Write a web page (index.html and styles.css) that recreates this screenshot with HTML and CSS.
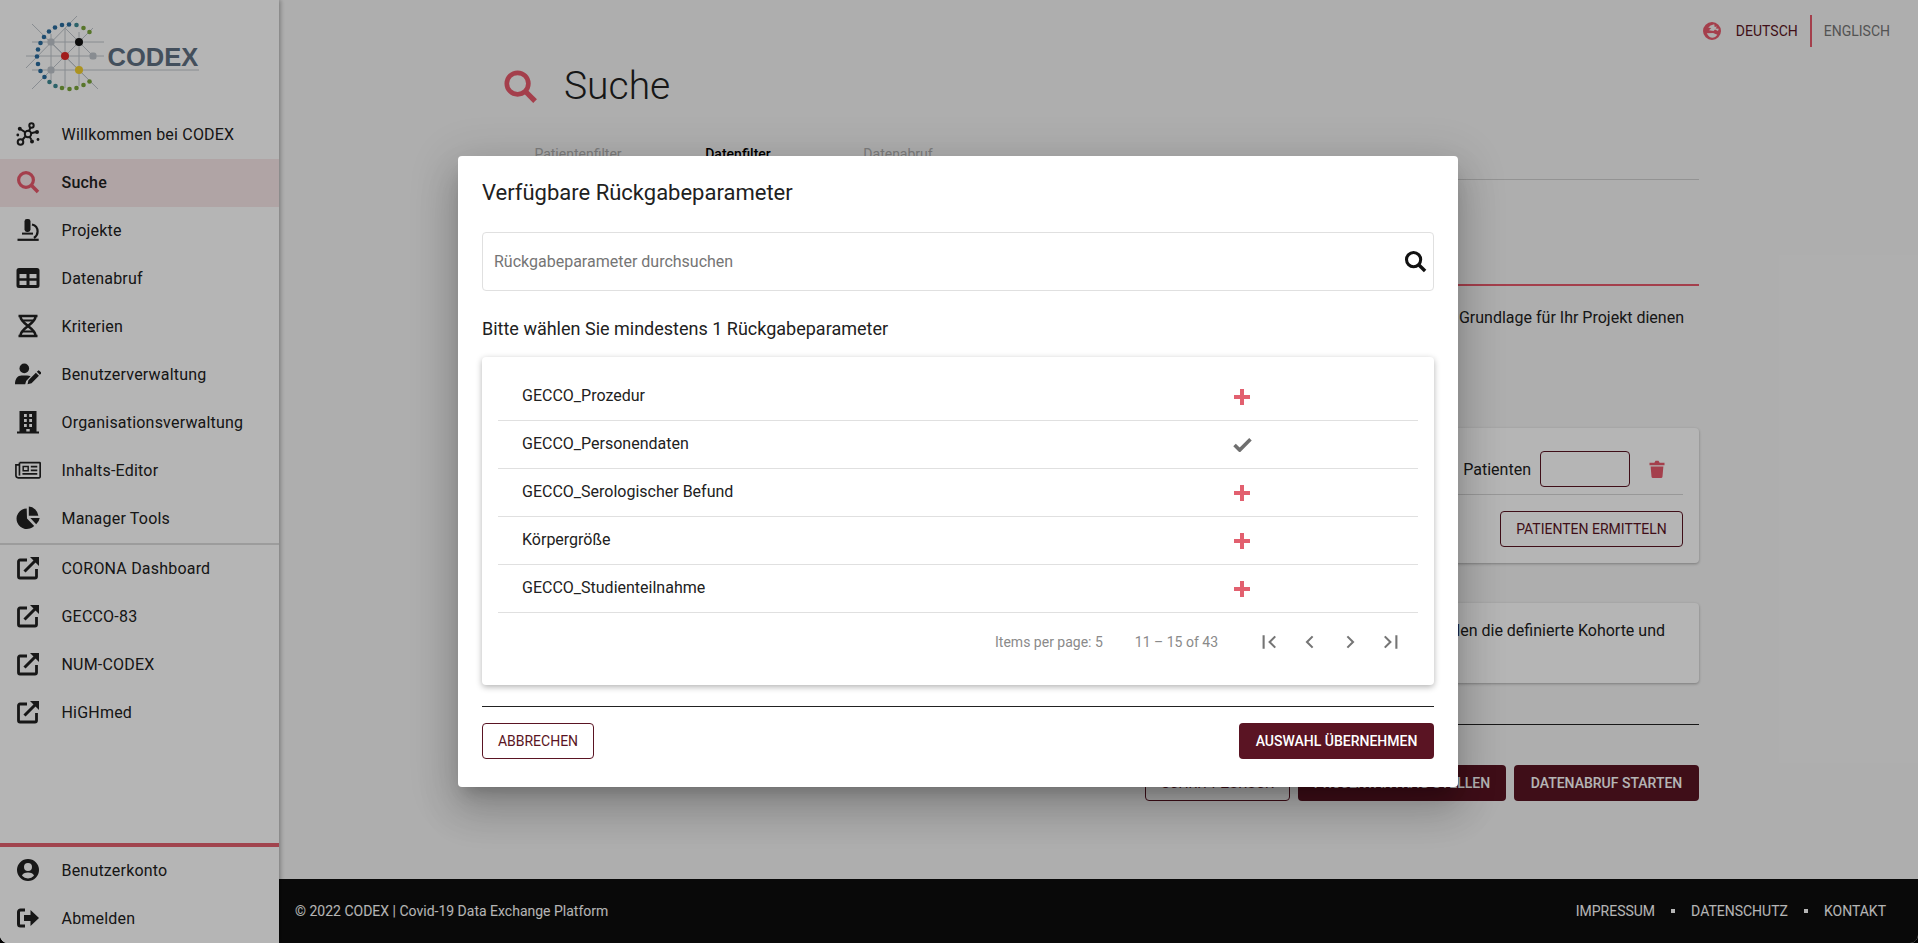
FILE: index.html

```html
<!DOCTYPE html>
<html lang="de">
<head>
    <meta charset="UTF-8">
    <meta name="viewport" content="width=device-width, initial-scale=1.0">
    <title>CODEX Suche</title>
    <link rel="stylesheet" href="styles.css">
</head>
<body>
<svg class="icon-defs" aria-hidden="true">
    <symbol id="i-search" viewBox="0 0 24 24">
        <circle cx="10" cy="10" r="7.4" fill="none" stroke="currentColor" stroke-width="3.2"/>
        <path d="M15.6 15.6L22 22" fill="none" stroke="currentColor" stroke-width="3.6"/>
    </symbol>
    <symbol id="i-molecule" viewBox="0 0 24 24">
        <g fill="none" stroke="currentColor" stroke-width="2">
            <circle cx="12" cy="12" r="3.200"/>
            <circle cx="15.500" cy="3.500" r="2.200"/>
            <circle cx="4.500" cy="20" r="2.800"/>
            <path d="M13 9l1.600-3.700M9.600 14.200l-3.300 3.800M15 11.300l5-1.300M9.400 10.400L5 7.500M13.500 14.800l2 3"/>
        </g>
        <circle cx="21" cy="10" r="2" fill="currentColor"/>
        <circle cx="3.800" cy="6.800" r="2" fill="currentColor"/>
        <circle cx="16" cy="19.500" r="2" fill="currentColor"/>
        <circle cx="22" cy="17.500" r="1.400" fill="currentColor"/>
        <circle cx="1.800" cy="13" r="1.400" fill="currentColor"/>
    </symbol>
    <symbol id="i-microscope" viewBox="0 0 24 24">
        <rect x="8.500" y="1" width="6" height="13" rx="2.400" fill="currentColor"/>
        <rect x="6" y="14.600" width="11" height="2" fill="currentColor"/>
        <path d="M16 6.500c3.600.9 5.600 3.600 5.600 7 0 3-1.600 5-3.600 6.500" fill="none" stroke="currentColor" stroke-width="2.200"/>
        <path d="M1.500 21.800h21.200" stroke="currentColor" stroke-width="2.200"/>
    </symbol>
    <symbol id="i-table" viewBox="0 0 24 24">
        <path fill-rule="evenodd" fill="currentColor" d="M3 2h18a2.500 2.500 0 0 1 2.500 2.500v15A2.500 2.500 0 0 1 21 22H3a2.500 2.500 0 0 1-2.500-2.500v-15A2.500 2.500 0 0 1 3 2zM3.500 8v4.300h7V8zM13.500 8v4.300h7V8zM3.500 14.700V19h7v-4.300zM13.500 14.700V19h7v-4.300z"/>
    </symbol>
    <symbol id="i-dna" viewBox="0 0 24 24">
        <path d="M2.500 2h19M2.500 22h19" stroke="currentColor" stroke-width="2.600"/>
        <path d="M4.500 2.500c0 7.500 15 11.500 15 19M19.500 2.500c0 7.500-15 11.500-15 19" fill="none" stroke="currentColor" stroke-width="2.600"/>
        <path d="M6.500 6.500h11M6.500 17.500h11" stroke="currentColor" stroke-width="1.800"/>
    </symbol>
    <symbol id="i-user-edit" viewBox="0 0 28 24">
        <circle cx="10" cy="6" r="5.200" fill="currentColor"/>
        <path d="M0 23c0-6 3-9.500 7-9.500h6c1.500 0 2.800.4 3.800 1L12 19.500 11 23z" fill="currentColor"/>
        <path d="M13.500 23l1-4.300 8-8 3.300 3.300-8 8zM23.500 9.700l1.300-1.300a1 1 0 0 1 1.400 0l1.800 1.800a1 1 0 0 1 0 1.400l-1.300 1.300z" fill="currentColor"/>
    </symbol>
    <symbol id="i-building" viewBox="0 0 24 24">
        <path fill-rule="evenodd" fill="currentColor" d="M3.500 1h17v20.500h2.500V23.500H1V21.500h2.500zM8 4v3h2.800V4zM13.200 4v3H16V4zM8 9v3h2.800V9zM13.200 9v3H16V9zM8 14v3h2.800v-3zM13.200 14v3H16v-3zM10.300 19v2.500h3.400V19z"/>
    </symbol>
    <symbol id="i-news" viewBox="0 0 28 24">
        <g fill="none" stroke="currentColor" stroke-width="1.800">
            <path d="M5 4h21.500a.6.600 0 0 1 .6.600v14.800a1 1 0 0 1-1 1H3.500A2.500 2.500 0 0 1 1 18V6.500h3.800"/>
            <path d="M4.800 4v14"/>
        </g>
        <path fill-rule="evenodd" fill="currentColor" d="M8 7.500h7v6H8zM9.600 9.100v2.800h3.800V9.100z"/>
        <path fill="currentColor" d="M17 7.500h7v1.800h-7zM17 11.500h7v1.800h-7zM8 15.300h16v1.800H8z"/>
    </symbol>
    <symbol id="i-pie" viewBox="0 0 24 24">
        <path fill="currentColor" d="M10.700 2.500A10.300 10.300 0 1 0 18.200 20L11 12.500z"/>
        <path fill="currentColor" d="M12.800 0.500A10.500 10.500 0 0 1 22.400 9.700H12.800z"/>
        <path fill="currentColor" d="M14.300 12h9.400a10.600 10.600 0 0 1-3.500 6.300z"/>
    </symbol>
    <symbol id="i-external" viewBox="0 0 24 24">
        <path d="M11 4H4a1.500 1.500 0 0 0-1.500 1.500v15A1.500 1.500 0 0 0 4 22h15a1.500 1.500 0 0 0 1.500-1.500V13" fill="none" stroke="currentColor" stroke-width="2.800"/>
        <path d="M8.500 15.500L20 4" stroke="currentColor" stroke-width="3"/>
        <path d="M14 1h9v9z" fill="currentColor"/>
    </symbol>
    <symbol id="i-user" viewBox="0 0 24 24">
        <path fill-rule="evenodd" fill="currentColor" d="M12 1a11 11 0 1 1 0 22 11 11 0 0 1 0-22zM12 5a4 4 0 1 0 0 8 4 4 0 0 0 0-8zM12 14.600c-3 0-5.400 1.200-6 3.100A8.500 8.500 0 0 0 12 20.400a8.500 8.500 0 0 0 6-2.700c-.6-1.900-3-3.100-6-3.100z"/>
    </symbol>
    <symbol id="i-logout" viewBox="0 0 24 24">
        <path d="M9 4H4.500A2 2 0 0 0 2.500 6v12a2 2 0 0 0 2 2H9" fill="none" stroke="currentColor" stroke-width="3"/>
        <path d="M8 9h6.500V4L23 12l-8.500 8v-5H8z" fill="currentColor"/>
    </symbol>
    <symbol id="i-globe" viewBox="0 0 24 24">
        <path fill-rule="evenodd" fill="currentColor" d="M12 0a12 12 0 1 1 0 24 12 12 0 0 1 0-24zM15 3l-5 1.500-3 3 4 .5-3 3 6 1 2-2 4 2 1-3-4-.5 1.500-2.500-3 .5zM5 15c2 4 5 6 7.500 6s5-1.500 6.500-4l-5.500-2.500z"/>
    </symbol>
    <symbol id="i-trash" viewBox="0 0 24 24">
        <path fill="currentColor" d="M2 3.500h6.500L10 1h4l1.500 2.500H22V7H2zM3.500 8.500h17l-1.200 13.700A2 2 0 0 1 17.300 24H6.700a2 2 0 0 1-2-1.800z"/>
    </symbol>
    <symbol id="i-first" viewBox="0 0 24 24">
        <path d="M3.500 3v18" stroke="currentColor" stroke-width="2.800" fill="none"/>
        <path d="M19 4.500l-7.500 7.500 7.500 7.500" stroke="currentColor" stroke-width="2.800" fill="none"/>
    </symbol>
    <symbol id="i-prev" viewBox="0 0 24 24">
        <path d="M15.500 4.500L8 12l7.500 7.500" stroke="currentColor" stroke-width="2.800" fill="none"/>
    </symbol>
    <symbol id="i-next" viewBox="0 0 24 24">
        <path d="M8.500 4.500L16 12l-7.500 7.500" stroke="currentColor" stroke-width="2.800" fill="none"/>
    </symbol>
    <symbol id="i-last" viewBox="0 0 24 24">
        <path d="M5 4.500l7.500 7.500L5 19.500" stroke="currentColor" stroke-width="2.800" fill="none"/>
        <path d="M20.500 3v18" stroke="currentColor" stroke-width="2.800" fill="none"/>
    </symbol>
</svg>

<div class="app">
    <aside class="sidebar">
        <div class="logo">
            <svg width="220" height="111" viewBox="0 0 220 111">
                <g stroke="#c0c6cc" stroke-width="1" fill="none">
                    <path d="M32 42h72M26 56h78M32 70h167"/>
                    <path d="M51 34v46M65 28v60M79 32v54"/>
                    <path d="M32 24l66 65M26 68l51-52M32 89l61-61M51 42l42 42M65 28l28 28"/>
                </g>
                <g fill="#2a6c9e">
                    <circle cx="62" cy="25" r="2.300"/><circle cx="55" cy="27.500" r="2.300"/><circle cx="49" cy="31.500" r="2.300"/>
                    <circle cx="44" cy="37" r="2.300"/><circle cx="40.500" cy="43" r="2.300"/><circle cx="38" cy="49.500" r="2.300"/>
                    <circle cx="37" cy="56.500" r="2.300"/><circle cx="38" cy="64" r="2.300"/><circle cx="40.500" cy="71" r="2.300"/>
                    <circle cx="44.500" cy="77" r="2.300"/><circle cx="69" cy="24.500" r="2.300"/>
                </g>
                <g fill="#3f8a94">
                    <circle cx="76.500" cy="25" r="2.300"/><circle cx="49.500" cy="82" r="2.300"/><circle cx="55.500" cy="86" r="2.300"/>
                </g>
                <g fill="#7ba63c">
                    <circle cx="83.500" cy="28" r="2.300"/><circle cx="89.500" cy="32" r="2.300"/><circle cx="62" cy="88" r="2.300"/>
                    <circle cx="69.500" cy="89" r="2.300"/><circle cx="76.500" cy="88" r="2.300"/><circle cx="83.500" cy="85" r="2.300"/>
                    <circle cx="89.500" cy="81.500" r="2.300"/>
                </g>
                <rect x="47.500" y="38.500" width="7" height="7" rx="2.500" fill="#c0c6cc"/>
                <circle cx="79" cy="42" r="4" fill="#111"/>
                <circle cx="65" cy="56" r="4" fill="#e32a2a"/>
                <rect x="89.500" y="52.500" width="7" height="7" rx="2.500" fill="#c0c6cc"/>
                <rect x="47.500" y="66.500" width="7" height="7" rx="2.500" fill="#c0c6cc"/>
                <circle cx="79" cy="70" r="4" fill="#f2cf2e"/>
                <text class="logo-text" x="107.500" y="65.500">CODEX</text>
            </svg>
        </div>
        <nav class="nav-main">
            <a class="nav-item"><svg class="nav-icon"><use href="#i-molecule"/></svg>Willkommen bei CODEX</a>
            <a class="nav-item active"><svg class="nav-icon"><use href="#i-search"/></svg>Suche</a>
            <a class="nav-item"><svg class="nav-icon"><use href="#i-microscope"/></svg>Projekte</a>
            <a class="nav-item"><svg class="nav-icon"><use href="#i-table"/></svg>Datenabruf</a>
            <a class="nav-item"><svg class="nav-icon"><use href="#i-dna"/></svg>Kriterien</a>
            <a class="nav-item"><svg class="nav-icon"><use href="#i-user-edit"/></svg>Benutzerverwaltung</a>
            <a class="nav-item"><svg class="nav-icon"><use href="#i-building"/></svg>Organisationsverwaltung</a>
            <a class="nav-item"><svg class="nav-icon"><use href="#i-news"/></svg>Inhalts-Editor</a>
            <a class="nav-item"><svg class="nav-icon"><use href="#i-pie"/></svg>Manager Tools</a>
        </nav>
        <nav class="nav-links">
            <a class="nav-item"><svg class="nav-icon"><use href="#i-external"/></svg>CORONA Dashboard</a>
            <a class="nav-item"><svg class="nav-icon"><use href="#i-external"/></svg>GECCO-83</a>
            <a class="nav-item"><svg class="nav-icon"><use href="#i-external"/></svg>NUM-CODEX</a>
            <a class="nav-item"><svg class="nav-icon"><use href="#i-external"/></svg>HiGHmed</a>
        </nav>
        <nav class="nav-bottom">
            <a class="nav-item"><svg class="nav-icon"><use href="#i-user"/></svg>Benutzerkonto</a>
            <a class="nav-item"><svg class="nav-icon"><use href="#i-logout"/></svg>Abmelden</a>
        </nav>
    </aside>

    <div class="main">
        <div class="lang">
            <svg class="lang-icon"><use href="#i-globe"/></svg>
            <span class="lang-active">DEUTSCH</span>
            <span class="lang-other">ENGLISCH</span>
        </div>
        <main class="content">
            <div class="page-title">
                <svg class="page-icon"><use href="#i-search"/></svg>
                <h1>Suche</h1>
            </div>
            <div class="tabs">
                <span class="tab">Patientenfilter</span>
                <span class="tab tab-current">Datenfilter</span>
                <span class="tab">Datenabruf</span>
            </div>
            <div class="section-head"></div>
            <p class="intro">Grundlage für Ihr Projekt dienen</p>
            <section class="panel panel-cohort">
                <div class="panel-row">
                    <span>Patienten</span>
                    <input class="count-input" type="text">
                    <svg class="trash"><use href="#i-trash"/></svg>
                </div>
                <div class="panel-actions">
                    <button class="btn btn-outline btn-wide">PATIENTEN ERMITTELN</button>
                </div>
            </section>
            <section class="panel panel-note">
                <p>stellen die definierte Kohorte und</p>
            </section>
            <hr class="rule">
            <div class="actions">
                <button class="btn btn-outline btn-back">SCHRITT ZURÜCK</button>
                <button class="btn btn-solid btn-request">PROJEKTANTRAG STELLEN</button>
                <button class="btn btn-solid btn-start">DATENABRUF STARTEN</button>
            </div>
        </main>
        <footer class="footer">
            <span>© 2022 CODEX | Covid-19 Data Exchange Platform</span>
            <div class="footer-links">
                <a>IMPRESSUM</a><i></i><a>DATENSCHUTZ</a><i></i><a>KONTAKT</a>
            </div>
        </footer>
    </div>

    <div class="backdrop">
        <div class="dialog">
            <h2>Verfügbare Rückgabeparameter</h2>
            <div class="search">
                <input type="text" placeholder="Rückgabeparameter durchsuchen">
                <svg class="search-icon"><use href="#i-search"/></svg>
            </div>
            <h3>Bitte wählen Sie mindestens 1 Rückgabeparameter</h3>
            <div class="list-card">
                <div class="list-row"><span class="row-name">GECCO_Prozedur</span><span class="plus"></span></div>
                <div class="list-row">
                    <span class="row-name">GECCO_Personendaten</span>
                    <svg class="check" viewBox="0 0 20 16"><path d="M1.500 8.500l5.500 5.500L18.500 2.500" fill="none" stroke="currentColor" stroke-width="3.800"/></svg>
                </div>
                <div class="list-row"><span class="row-name">GECCO_Serologischer Befund</span><span class="plus"></span></div>
                <div class="list-row"><span class="row-name">Körpergröße</span><span class="plus"></span></div>
                <div class="list-row"><span class="row-name">GECCO_Studienteilnahme</span><span class="plus"></span></div>
                <div class="paginator">
                    <span>Items per page: 5</span>
                    <span>11 – 15 of 43</span>
                    <div class="pager-btns">
                        <svg><use href="#i-first"/></svg>
                        <svg><use href="#i-prev"/></svg>
                        <svg><use href="#i-next"/></svg>
                        <svg><use href="#i-last"/></svg>
                    </div>
                </div>
            </div>
            <hr class="dialog-rule">
            <div class="dialog-actions">
                <button class="btn btn-outline btn-cancel">ABBRECHEN</button>
                <button class="btn btn-solid btn-apply">AUSWAHL ÜBERNEHMEN</button>
            </div>
        </div>
    </div>
</div>
</body>
</html>
```

FILE: styles.css

```css
* {
    box-sizing: border-box;
}
html {
    background: #000;
}
body {
    margin: 0;
    font-family: Roboto, 'Liberation Sans', sans-serif;
    color: #212121;
}
.icon-defs {
    display: none;
}
.app {
    display: flex;
    height: 943px;
    overflow: hidden;
    position: relative;
    border-radius: 0 0 8px 8px;
    background: #f6f6f6;
}

/* sidebar */
.sidebar {
    width: 279px;
    flex-shrink: 0;
    display: flex;
    flex-direction: column;
    background: #fff;
    box-shadow: 2px 0 4px rgba(0, 0, 0, 0.25);
    position: relative;
    z-index: 1;
}
.logo {
    height: 111px;
}
.logo svg {
    display: block;
}
.logo-text {
    font-family: 'Liberation Sans', sans-serif;
    font-weight: bold;
    font-size: 25.5px;
    fill: #5f7082;
}
.nav-main {
    border-bottom: 2px solid #dcdcdc;
}
.nav-links {
    flex: 1;
}
.nav-bottom {
    border-top: 4px solid #e3606f;
}
.nav-item {
    display: flex;
    align-items: center;
    height: 48px;
    padding: 0 0 2px 15px;
    font-size: 16px;
    letter-spacing: 0.2px;
    color: #212121;
}
.nav-icon {
    width: 26px;
    height: 24px;
    margin-right: 20.5px;
    flex-shrink: 0;
}
.nav-item.active {
    background: #f8e7e9;
    font-weight: 500;
}
.nav-item.active .nav-icon {
    color: #e8596b;
}

/* main */
.main {
    flex: 1;
    display: flex;
    flex-direction: column;
    position: relative;
    min-width: 0;
}
.lang {
    position: absolute;
    top: 15px;
    right: 28px;
    display: flex;
    align-items: center;
    height: 32px;
    font-size: 14px;
}
.lang-icon {
    width: 18px;
    height: 18px;
    color: #e8596b;
    margin-right: 15px;
}
.lang-active {
    color: #5a1423;
    padding-right: 12px;
    border-right: 2px solid #e8596b;
    line-height: 32px;
}
.lang-other {
    color: #757575;
    padding-left: 12px;
}
.content {
    flex: 1;
    padding: 62px 219px 0 219px;
}
.page-title {
    display: flex;
    align-items: center;
    height: 48px;
    padding-left: 5px;
}
.page-icon {
    width: 35px;
    height: 35px;
    color: #e8596b;
    margin-right: 26px;
}
h1 {
    margin: 0;
    font-size: 39px;
    font-weight: 300;
}
.tabs {
    display: flex;
    align-items: flex-end;
    height: 70px;
    padding-bottom: 16px;
    border-bottom: 1px solid #d0d0d0;
}
.tab {
    width: 160px;
    text-align: center;
    font-size: 14px;
    line-height: 18px;
    color: #b0b0b0;
}
.tab-current {
    color: #000;
    font-weight: 500;
}
.section-head {
    height: 106px;
    border-bottom: 2px solid #e8596b;
}
.intro {
    margin: 20px 0 0;
    height: 122px;
    padding-right: 15px;
    text-align: right;
    font-size: 16px;
    line-height: 24px;
}
.panel {
    background: #fff;
    border-radius: 4px;
    box-shadow: 0 1px 3px rgba(0, 0, 0, 0.3);
}
.panel-cohort {
    height: 135px;
    padding: 0 16px;
}
.panel-row {
    display: flex;
    align-items: center;
    justify-content: flex-end;
    height: 67px;
    padding: 16px 17px 0 0;
    font-size: 16px;
    border-bottom: 1px solid #d6d6d6;
}
.count-input {
    width: 90px;
    height: 36px;
    margin-left: 9px;
    background: transparent;
    border: 1px solid #5a1423;
    border-radius: 4px;
}
.trash {
    width: 18px;
    height: 18px;
    margin-left: 18px;
    color: #e8596b;
}
.panel-actions {
    display: flex;
    justify-content: flex-end;
    padding-top: 16px;
}
.panel-note {
    height: 80px;
    margin-top: 40px;
    padding: 16px 34px 0 0;
}
.panel-note p {
    margin: 0;
    text-align: right;
    font-size: 16px;
    line-height: 24px;
}
.rule {
    margin: 41px 0 0;
    border: 0;
    border-top: 1px solid #222;
}
.actions {
    display: flex;
    justify-content: flex-end;
    gap: 8px;
    margin-top: 40px;
}
.btn {
    height: 36px;
    padding: 0;
    border-radius: 4px;
    font-family: inherit;
    font-size: 14px;
    font-weight: 500;
}
.btn-outline {
    background: transparent;
    border: 1px solid #5a1423;
    color: #5a1423;
    font-weight: 400;
}
.btn-solid {
    background: #5a1423;
    border: 0;
    color: #fff;
}
.btn-wide { width: 183px; }
.btn-back { width: 145px; }
.btn-request { width: 208px; }
.btn-start { width: 185px; }
.btn-cancel { width: 112px; }
.btn-apply { width: 195px; }

/* footer */
.footer {
    height: 64px;
    display: flex;
    align-items: center;
    justify-content: space-between;
    padding: 0 32px 0 16px;
    background: #0e0e0e;
    color: #fff;
    font-size: 14px;
}
.footer-links {
    display: flex;
    align-items: center;
}
.footer-links i {
    width: 4px;
    height: 4px;
    margin: 0 16px;
    background: #fff;
}

/* dialog */
.backdrop {
    position: absolute;
    inset: 0;
    z-index: 5;
    display: flex;
    align-items: center;
    justify-content: center;
    padding-right: 2px;
    background: rgba(0, 0, 0, 0.29);
}
.dialog {
    width: 1000px;
    height: 631px;
    padding: 25px 24px 0;
    background: #fff;
    border-radius: 4px;
    box-shadow: 0 11px 15px -7px rgba(0, 0, 0, 0.2), 0 24px 38px 3px rgba(0, 0, 0, 0.14), 0 9px 46px 8px rgba(0, 0, 0, 0.12);
}
h2 {
    margin: 0;
    font-size: 22px;
    font-weight: 400;
    line-height: 24px;
}
.search {
    display: flex;
    align-items: center;
    height: 59px;
    margin-top: 27px;
    padding: 0 6px 0 11px;
    border: 1px solid #e0e0e0;
    border-radius: 4px;
}
.search input {
    flex: 1;
    border: 0;
    outline: 0;
    padding: 0;
    font-family: inherit;
    font-size: 16px;
}
.search input::placeholder {
    color: #757575;
    opacity: 1;
}
.search-icon {
    width: 23px;
    height: 23px;
    color: #111;
}
h3 {
    margin: 26px 0 0;
    font-size: 18px;
    font-weight: 400;
    line-height: 24px;
}
.list-card {
    height: 328px;
    margin-top: 16px;
    padding: 16px 16px 0;
    border-radius: 4px;
    box-shadow: 0 2px 6px rgba(0, 0, 0, 0.3);
}
.list-row {
    display: grid;
    grid-template-columns: 640px 160px 1fr;
    align-items: center;
    height: 48px;
    padding-left: 24px;
    border-bottom: 1px solid #e0e0e0;
    font-size: 16px;
}
.row-name {
    margin-bottom: 2px;
    justify-self: start;
}
.plus {
    justify-self: center;
    width: 16px;
    height: 16px;
    border-radius: 2px;
    background:
        linear-gradient(#e2606f, #e2606f) center / 100% 4px no-repeat,
        linear-gradient(#e2606f, #e2606f) center / 4px 100% no-repeat;
}
.check {
    justify-self: center;
    width: 19px;
    height: 15px;
    color: #6f6f6f;
}
.paginator {
    display: flex;
    align-items: center;
    justify-content: flex-end;
    gap: 32px;
    height: 58px;
    padding-right: 8px;
    font-size: 14px;
    color: #8a8a8a;
}
.pager-btns {
    display: flex;
}
.pager-btns svg {
    width: 40px;
    height: 18px;
    color: #757575;
}
.dialog-rule {
    margin: 21px 0 0;
    border: 0;
    border-top: 1px solid #222;
}
.dialog-actions {
    display: flex;
    justify-content: space-between;
    margin-top: 16px;
}
```
